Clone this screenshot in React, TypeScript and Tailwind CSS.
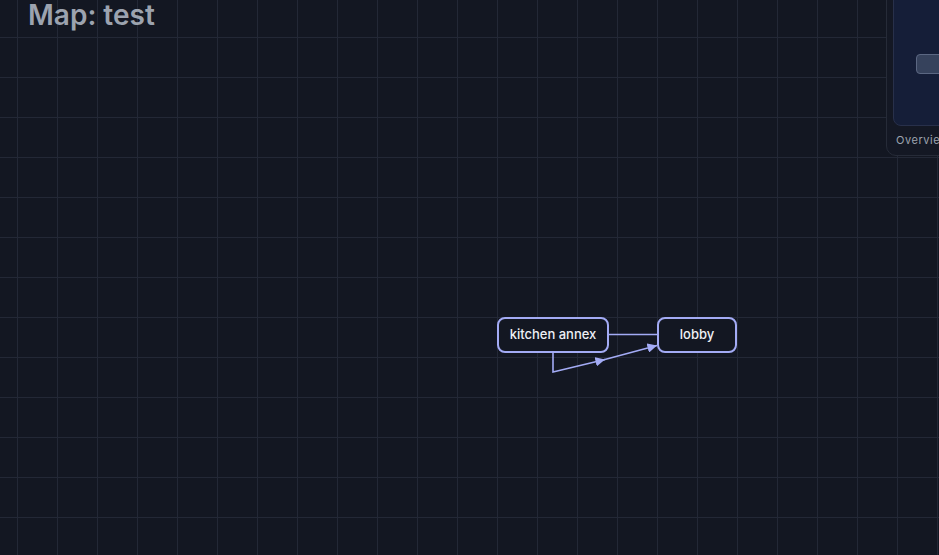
import React from "react";

type MapNode = { id: string; label: string; x: number; y: number; w: number };

const nodes: MapNode[] = [
  { id: "kitchen", label: "kitchen annex", x: 497, y: 317, w: 112 },
  { id: "lobby", label: "lobby", x: 657, y: 317, w: 80 },
];

const EDGE = "#a3abf5";

const Edges = () => (
  <svg className="absolute inset-0 pointer-events-none" width="939" height="555">
    <defs>
      <marker
        id="arrow"
        viewBox="0 0 10 10"
        refX="10"
        refY="5"
        markerWidth="6"
        markerHeight="6"
        orient="auto"
      >
        <path d="M0 0 L10 5 L0 10 z" fill={EDGE} />
      </marker>
    </defs>
    {/* straight link */}
    <path d="M609 334.5 L657 334.5" stroke={EDGE} strokeWidth={1.6} fill="none" />
    {/* routed link with arrows */}
    <path
      d="M553 352 L553 372 L605 359.5"
      stroke={EDGE}
      strokeWidth={1.6}
      fill="none"
      markerEnd="url(#arrow)"
    />
    <path
      d="M603 360 L657 345.5"
      stroke={EDGE}
      strokeWidth={1.6}
      fill="none"
      markerEnd="url(#arrow)"
    />
  </svg>
);

export default function App() {
  return (
    <div
      className="relative w-[939px] h-[555px] overflow-hidden bg-[#131722] bg-[linear-gradient(to_right,#232836_1px,transparent_1px),linear-gradient(to_bottom,#232836_1px,transparent_1px)] bg-[size:40px_40px] bg-[position:17px_37px]"
      style={{ fontFamily: "Inter, 'Noto Sans', sans-serif" }}
    >
      <h1 className="absolute left-[28px] top-[1px] text-[28px] leading-none font-semibold text-[#9ca3af]">
        Map: test
      </h1>

      <Edges />

      {nodes.map((n) => (
        <div
          key={n.id}
          className="absolute h-[36px] flex items-center justify-center rounded-[8px] border-2 border-[#a3abf5] bg-[#131722] text-[13px] font-medium text-[#eef0f6]"
          style={{ left: n.x, top: n.y, width: n.w }}
        >
          {n.label}
        </div>
      ))}

      {/* overview panel */}
      <div className="absolute left-[886px] top-[-20px] w-[200px] h-[176px] rounded-[10px] border border-[#262b38] bg-[#141824] p-[6px] flex flex-col">
        <div className="relative h-[139px] rounded-[8px] border border-[#28304a] bg-[#151e38]">
          <div className="absolute left-[22px] top-[66px] w-[60px] h-[20px] rounded-[4px] border border-[#5b6782] bg-[#36425c]" />
        </div>
        <div className="pl-[3px] pt-[6px] text-[11px] tracking-wider text-[#9ca3af]">Overview</div>
      </div>
    </div>
  );
}
